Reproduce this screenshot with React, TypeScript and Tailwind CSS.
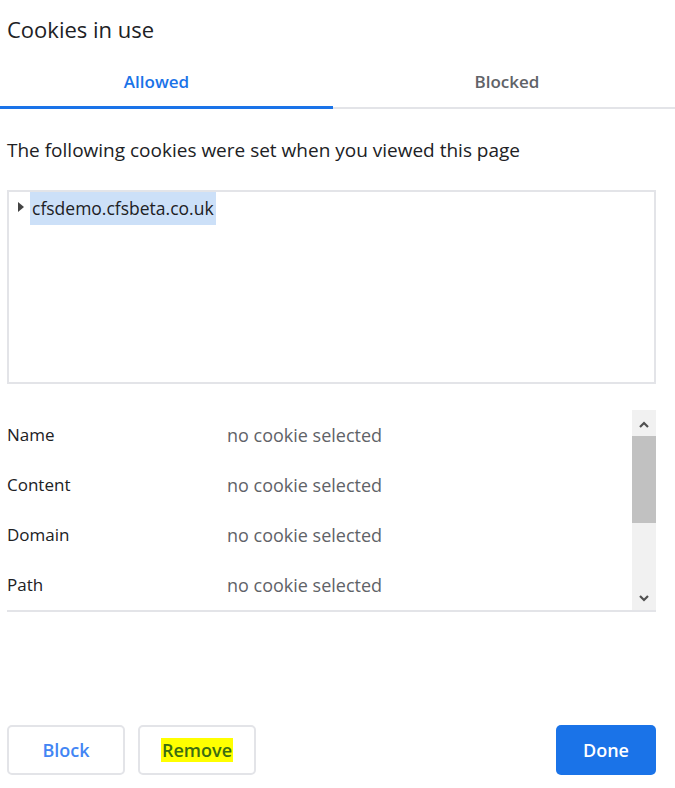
import { ReactNode } from "react";

const rows = ["Name", "Content", "Domain", "Path"];

function Button({ children, primary }: { children: ReactNode; primary?: boolean }) {
  return primary ? (
    <button className="h-[50px] w-[100px] rounded-[5px] bg-[#1a73e8] text-[18px] font-semibold text-white">
      {children}
    </button>
  ) : (
    <button className="h-[50px] w-[118px] rounded-[5px] border-2 border-[#e3e4e8] bg-white text-[18px] font-semibold">
      {children}
    </button>
  );
}

export default function App() {
  return (
    <main
      className="w-[675px] h-[788px] bg-white text-[#202124] flex flex-col"
      style={{ fontFamily: '"Open Sans", "Noto Sans", sans-serif' }}
    >
      {/* TITLE */}
      <h1 className="px-[7px] pt-[14px] text-[22px] leading-[30px]">Cookies in use</h1>

      {/* TABS */}
      <div className="mt-[23px] flex">
        <div className="w-[333px] h-[42px] pt-[2px] pr-[20px] flex items-start justify-center border-b-[3px] border-[#1a73e8]">
          <span className="text-[17px] leading-[26px] font-semibold text-[#1a73e8]">Allowed</span>
        </div>
        <div className="flex-1 h-[42px] pt-[2px] pl-[6px] flex items-start justify-center border-b-[2px] border-[#e3e4e8]">
          <span className="text-[17px] leading-[26px] font-semibold text-[#5f6368]">Blocked</span>
        </div>
      </div>

      <p className="px-[7px] mt-[28px] text-[19px] leading-[26px]">
        The following cookies were set when you viewed this page
      </p>

      {/* COOKIE TREE */}
      <div className="mx-[7px] mt-[27px] h-[194px] w-[649px] border-2 border-[#e3e4e8]">
        <div className="flex items-center pl-[8px]">
          <svg width="8" height="12" viewBox="0 0 8 12" className="mr-[5px] mb-[4px]">
            <path d="M1 1 L7 6 L1 11 Z" fill="#444" />
          </svg>
          <span className="bg-[#cce0f8] px-[2px] text-[17.5px] leading-[33px]">cfsdemo.cfsbeta.co.uk</span>
        </div>
      </div>

      {/* DETAILS */}
      <div className="mx-[7px] mt-[26px] w-[649px] h-[202px] flex border-b-2 border-[#e3e4e8]">
        <div className="flex-1">
          {rows.map((r) => (
            <div key={r} className="flex h-[50px] items-center text-[17px]">
              <span className="w-[220px]">{r}</span>
              <span className="text-[18px] text-[#5f6368]">no cookie selected</span>
            </div>
          ))}
        </div>
        <div className="w-[24px] bg-[#f1f1f1] flex flex-col items-center">
          <svg width="12" height="12" viewBox="0 0 12 12" className="mt-[9px] mb-[5px]">
            <path d="M2 8 L6 4 L10 8" stroke="#505050" strokeWidth="2.2" fill="none" />
          </svg>
          <div className="w-full h-[87px] bg-[#c1c1c1]" />
          <div className="flex-1" />
          <svg width="12" height="12" viewBox="0 0 12 12" className="mb-[6px]">
            <path d="M2 4 L6 8 L10 4" stroke="#505050" strokeWidth="2.2" fill="none" />
          </svg>
        </div>
      </div>

      {/* ACTIONS */}
      <div className="mt-auto mb-[13px] px-[7px] flex items-center">
        <div className="flex gap-[13px]">
          <Button>
            <span className="text-[#4285f4]">Block</span>
          </Button>
          <Button>
            <span className="bg-[#ffff00] text-[#3b6d12] px-[1px]">Remove</span>
          </Button>
        </div>
        <div className="ml-auto mr-[12px]">
          <Button primary>Done</Button>
        </div>
      </div>
    </main>
  );
}
